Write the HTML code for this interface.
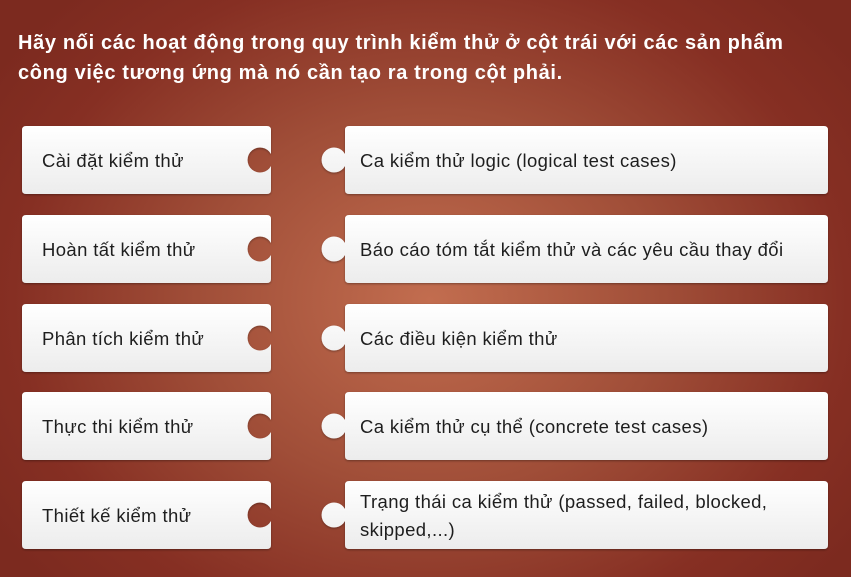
<!DOCTYPE html>
<html><head><meta charset="utf-8"><style>
html,body{margin:0;padding:0}
body{width:851px;height:577px;overflow:hidden;position:relative;font-family:"Liberation Sans","DejaVu Sans",sans-serif;
background:radial-gradient(ellipse 520px 420px at 430px 300px,#c26d4f 0%,#a04e38 45%,#862f23 80%,#7c2a1f 100%);}
.t{position:absolute;left:18px;top:28px;width:800px;color:#fff;font-weight:bold;font-size:20px;line-height:30px;letter-spacing:0.65px}
svg.c{position:absolute;overflow:visible}
.tx{position:absolute;font-size:18.5px;color:#1e1e1e;line-height:28px;letter-spacing:0.38px}
</style></head><body>
<div class="t">Hãy nối các hoạt động trong quy trình kiểm thử ở cột trái với các sản phẩm<br>công việc tương ứng mà nó cần tạo ra trong cột phải.</div>
<svg width="0" height="0" style="position:absolute"><defs>
<linearGradient id="g" x1="0" y1="0" x2="0" y2="1"><stop offset="0" stop-color="#ffffff"/><stop offset="1" stop-color="#ececec"/></linearGradient>
<filter id="s" x="-5%" y="-10%" width="110%" height="130%"><feDropShadow dx="0" dy="1" stdDeviation="1" flood-color="#000" flood-opacity="0.35"/></filter>
</defs></svg>

<svg class="c" style="left:22px;top:126px" width="250" height="69"><path filter="url(#s)" fill="url(#g)" d="M4,0 H245 Q249,0 249,4 V28 A12.5,12.5 0 1 0 249,40 V64 Q249,68 245,68 H4 Q0,68 0,64 V4 Q0,0 4,0 Z"/></svg>
<svg class="c" style="left:322px;top:126px" width="507" height="69"><path filter="url(#s)" fill="url(#g)" d="M27,0 H502 Q506,0 506,4 V64 Q506,68 502,68 H27 Q23,68 23,64 V40 A12.5,12.5 0 1 1 23,28 V4 Q23,0 27,0 Z"/></svg>
<div class="tx" style="left:42px;top:147px">Cài đặt kiểm thử</div>
<div class="tx" style="left:360px;top:147px">Ca kiểm thử logic (logical test cases)</div>

<svg class="c" style="left:22px;top:215px" width="250" height="69"><path filter="url(#s)" fill="url(#g)" d="M4,0 H245 Q249,0 249,4 V28 A12.5,12.5 0 1 0 249,40 V64 Q249,68 245,68 H4 Q0,68 0,64 V4 Q0,0 4,0 Z"/></svg>
<svg class="c" style="left:322px;top:215px" width="507" height="69"><path filter="url(#s)" fill="url(#g)" d="M27,0 H502 Q506,0 506,4 V64 Q506,68 502,68 H27 Q23,68 23,64 V40 A12.5,12.5 0 1 1 23,28 V4 Q23,0 27,0 Z"/></svg>
<div class="tx" style="left:42px;top:236px">Hoàn tất kiểm thử</div>
<div class="tx" style="left:360px;top:236px">Báo cáo tóm tắt kiểm thử và các yêu cầu thay đổi</div>

<svg class="c" style="left:22px;top:304px" width="250" height="69"><path filter="url(#s)" fill="url(#g)" d="M4,0 H245 Q249,0 249,4 V28 A12.5,12.5 0 1 0 249,40 V64 Q249,68 245,68 H4 Q0,68 0,64 V4 Q0,0 4,0 Z"/></svg>
<svg class="c" style="left:322px;top:304px" width="507" height="69"><path filter="url(#s)" fill="url(#g)" d="M27,0 H502 Q506,0 506,4 V64 Q506,68 502,68 H27 Q23,68 23,64 V40 A12.5,12.5 0 1 1 23,28 V4 Q23,0 27,0 Z"/></svg>
<div class="tx" style="left:42px;top:325px">Phân tích kiểm thử</div>
<div class="tx" style="left:360px;top:325px">Các điều kiện kiểm thử</div>

<svg class="c" style="left:22px;top:392px" width="250" height="69"><path filter="url(#s)" fill="url(#g)" d="M4,0 H245 Q249,0 249,4 V28 A12.5,12.5 0 1 0 249,40 V64 Q249,68 245,68 H4 Q0,68 0,64 V4 Q0,0 4,0 Z"/></svg>
<svg class="c" style="left:322px;top:392px" width="507" height="69"><path filter="url(#s)" fill="url(#g)" d="M27,0 H502 Q506,0 506,4 V64 Q506,68 502,68 H27 Q23,68 23,64 V40 A12.5,12.5 0 1 1 23,28 V4 Q23,0 27,0 Z"/></svg>
<div class="tx" style="left:42px;top:413px">Thực thi kiểm thử</div>
<div class="tx" style="left:360px;top:413px">Ca kiểm thử cụ thể (concrete test cases)</div>

<svg class="c" style="left:22px;top:481px" width="250" height="69"><path filter="url(#s)" fill="url(#g)" d="M4,0 H245 Q249,0 249,4 V28 A12.5,12.5 0 1 0 249,40 V64 Q249,68 245,68 H4 Q0,68 0,64 V4 Q0,0 4,0 Z"/></svg>
<svg class="c" style="left:322px;top:481px" width="507" height="69"><path filter="url(#s)" fill="url(#g)" d="M27,0 H502 Q506,0 506,4 V64 Q506,68 502,68 H27 Q23,68 23,64 V40 A12.5,12.5 0 1 1 23,28 V4 Q23,0 27,0 Z"/></svg>
<div class="tx" style="left:42px;top:502px">Thiết kế kiểm thử</div>
<div class="tx" style="left:360px;top:488px;width:430px">Trạng thái ca kiểm thử (passed, failed, blocked, skipped,...)</div>
</body></html>
